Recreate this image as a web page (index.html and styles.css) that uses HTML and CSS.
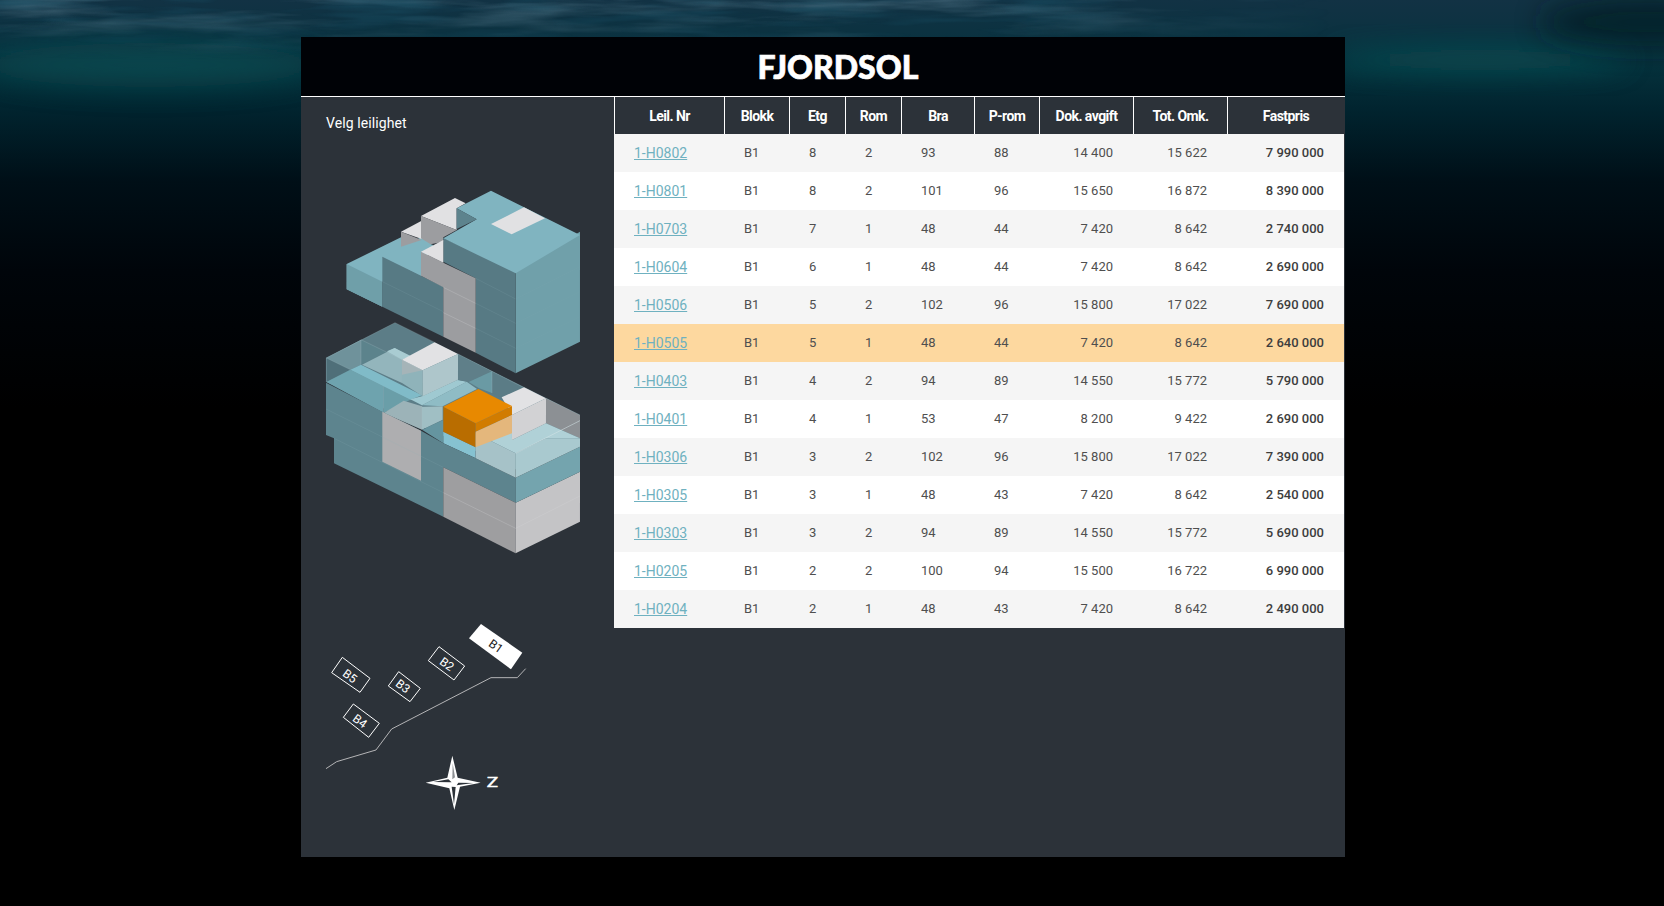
FILE: index.html
```html
<!DOCTYPE html>
<html lang="no">
<head>
<meta charset="utf-8">
<title>Fjordsol</title>
<link rel="stylesheet" href="styles.css">
</head>
<body>
<svg class="backdrop" viewBox="0 0 1664 906" preserveAspectRatio="none" aria-hidden="true">
  <defs>
    <linearGradient id="sea" x1="0" y1="0" x2="0" y2="1">
      <stop offset="0" stop-color="#123244"/>
      <stop offset="0.045" stop-color="#0a3240"/>
      <stop offset="0.075" stop-color="#05313c"/>
      <stop offset="0.12" stop-color="#01242f"/>
      <stop offset="0.2" stop-color="#000f17"/>
      <stop offset="0.3" stop-color="#00050a"/>
      <stop offset="0.45" stop-color="#000"/>
    </linearGradient>
    <filter id="soft" x="-30%" y="-100%" width="160%" height="300%"><feGaussianBlur stdDeviation="14"/></filter>
    <filter id="waves" x="0" y="0" width="100%" height="100%">
      <feTurbulence type="fractalNoise" baseFrequency="0.007 0.06" numOctaves="4" seed="11"/>
      <feColorMatrix type="matrix" values="0 0 0 0 0.2  0 0 0 0 0.36  0 0 0 0 0.46  2.4 0 0 0 -1.1"/>
    </filter>
    <filter id="troughs" x="0" y="0" width="100%" height="100%">
      <feTurbulence type="fractalNoise" baseFrequency="0.009 0.09" numOctaves="3" seed="4"/>
      <feColorMatrix type="matrix" values="0 0 0 0 0.01  0 0 0 0 0.08  0 0 0 0 0.13  3 0 0 0 -1.3"/>
    </filter>
    <linearGradient id="fade" x1="0" y1="0" x2="0" y2="1">
      <stop offset="0" stop-color="#fff"/>
      <stop offset="0.5" stop-color="#666"/>
      <stop offset="1" stop-color="#000"/>
    </linearGradient>
    <linearGradient id="fadeX" x1="0" y1="0" x2="1" y2="0">
      <stop offset="0" stop-color="#fff"/>
      <stop offset="0.6" stop-color="#fff"/>
      <stop offset="0.8" stop-color="#000"/>
    </linearGradient>
    <mask id="fadeMask"><rect width="1664" height="60" fill="url(#fade)"/></mask>
    <mask id="fadeSide"><rect width="1664" height="60" fill="url(#fadeX)"/></mask>
  </defs>
  <rect width="1664" height="906" fill="url(#sea)"/>
  <ellipse cx="150" cy="65" rx="170" ry="22" fill="#0b575a" opacity=".55" filter="url(#soft)"/>
  <ellipse cx="1480" cy="60" rx="150" ry="12" fill="#0c5558" opacity=".7" filter="url(#soft)"/>
  <ellipse cx="1650" cy="22" rx="110" ry="24" fill="#021a22" opacity=".7" filter="url(#soft)"/>
  <g mask="url(#fadeSide)">
    <rect width="1664" height="60" filter="url(#waves)" mask="url(#fadeMask)" opacity=".5"/>
    <rect width="1664" height="60" filter="url(#troughs)" mask="url(#fadeMask)" opacity=".6"/>
  </g>
</svg>

<main class="panel">
  <header class="masthead"><h1 class="brand">FJORDSOL</h1></header>
  <div class="content">
    <section class="picker">
      <h2 class="picker-title">Velg leilighet</h2>

      <svg class="iso" viewBox="301 130 313 430" role="img" aria-label="Bygg B1">
        <!-- upper volume -->
        <g transform="translate(300 130) scale(.3333)">
          <polygon points="140,402 303,322 400,345 363,400 247,455 247,530 140,478" fill="#80b4c0"/>
          <polygon points="247,380 363,322 395,340 363,440" fill="#80b4c0"/>
          <polygon points="140,402 247,455 247,530 140,478" fill="#6f9fa9"/>
          <polygon points="247,380 430,470 430,620 247,530" fill="#577a84"/>
          <line x1="247" y1="455" x2="430" y2="545" class="seam"/>
          <polygon points="303,305 365,272 365,327" fill="#e1e1e3"/>
          <polygon points="303,305 365,330 303,350" fill="#9c9da0"/>
          <polygon points="363,258 465,204 497,220 470,235 470,300" fill="#e1e1e3"/>
          <polygon points="363,258 470,300 430,322 430,335 392,343 363,325" fill="#9c9da0"/>
          <polygon points="840,305 840,635 647,730 647,420" fill="#70a0aa"/>
          <polygon points="430,325 647,420 647,730 527,668 527,445 430,395" fill="#577a84"/>
          <polygon points="470,235 573,182 840,315 647,430 430,325 530,268" fill="#80b4c0"/>
          <polygon points="470,235 530,268 470,297" fill="#5d838d"/>
          <polygon points="672,232 735,265 635,313 573,282" fill="#e1e1e3"/>
          <polygon points="363,365 430,398 527,445 527,668 430,620 430,472 363,437" fill="#9c9da0"/>
          <polygon points="363,365 430,330 430,398" fill="#e1e1e3"/>
          <line x1="647" y1="507" x2="840" y2="410" class="seam-faint"/>
          <line x1="647" y1="580" x2="840" y2="485" class="seam-faint"/>
          <line x1="647" y1="655" x2="840" y2="560" class="seam-faint"/>
          <line x1="527" y1="445" x2="647" y2="507" class="seam"/>
          <line x1="527" y1="520" x2="647" y2="580" class="seam"/>
          <line x1="527" y1="595" x2="647" y2="655" class="seam"/>
          <line x1="430" y1="472" x2="527" y2="520" class="seam-light"/>
          <line x1="430" y1="548" x2="527" y2="595" class="seam-light"/>
        </g>
        <!-- lower volume -->
        <g transform="translate(300 310) scale(.3333)">
          <polygon points="78,143 285,38 840,315 840,385 647,478 78,215" fill="#5c7d87"/>
          <polygon points="79,144 183,89 183,164 151,179" fill="#6f929b"/>
          <polygon points="79,144 151,179 79,216" fill="#4f6f79"/>
          <polygon points="183,89 306,149 306,127 284,114 183,164" fill="#5c838c"/>
          <polygon points="186,164 284,114 306,127 306,219" fill="#93b5bc"/>
          <polygon points="261,124 284,114 334,139 306,149" fill="#a9ccd2"/>
          <polygon points="79,216 151,179 251,229 251,309" fill="#6ea3ae"/>
          <polygon points="251,229 331,269 251,309" fill="#6a9ea8"/>
          <polygon points="151,179 183,164 366,256 331,269" fill="#80bbc8"/>
          <polygon points="366,286 500,215 531,237 428,289" fill="#8fbcc5"/>
          <polygon points="331,268 368,258 472,210 500,215 366,286" fill="#9fc9d1"/>
          <polygon points="366,290 428,289 428,329 366,359" fill="#a0bfc4"/>
          <polygon points="251,309 311,272 366,289 366,359" fill="#9cb3b8"/>
          <polygon points="474,132 576,184 506,216 474,209" fill="#5f7f89"/>
          <polygon points="506,216 576,184 576,249 536,234" fill="#6a9aa4"/>
          <polygon points="576,184 670,232 605,262 576,249" fill="#5b7c86"/>
          <polygon points="366,359 430,330 430,400" fill="#6595a0"/>
          <polygon points="430,365 527,412 527,445 430,400" fill="#86c2d1"/>
          <polygon points="78,218 247,305 363,362 430,400 527,445 647,503 647,578 430,472 430,620 102,460 102,385 78,375" fill="#5d848e"/>
          <polygon points="247,305 363,362 363,512 247,455" fill="#aeaeb0"/>
          <polygon points="430,472 647,578 647,730 430,620" fill="#9e9ea0"/>
          <polygon points="647,578 840,485 840,635 647,730" fill="#c4c4c6"/>
          <polygon points="647,503 840,410 840,485 647,578" fill="#74a4ae"/>
          <polygon points="738,265 840,315 840,385 738,340" fill="#8c9094"/>
          <polygon points="527,370 636,315 636,390 738,340 840,385 738,385 647,430" fill="#b0d1d7"/>
          <polygon points="647,430 738,385 840,385 840,410 647,503" fill="#a9c9cf"/>
          <polygon points="527,370 647,430 647,503 527,445" fill="#a6c2c8"/>
          <line x1="647" y1="430" x2="840" y2="332" class="seam-strong"/>
          <polygon points="605,262 672,232 738,265 636,315" fill="#e2e2e4"/>
          <polygon points="636,315 738,265 738,340 636,390" fill="#d2d2d4"/>
          <polygon points="306,149 368,181 368,259 306,219" fill="#8fb3ba"/>
          <polygon points="306,149 368,181 306,194" fill="#a5b4b8"/>
          <polygon points="306,149 404,97 474,132 368,181" fill="#e2e2e4"/>
          <polygon points="368,181 474,132 474,209 368,259" fill="#aec6cb"/>
          <polygon points="430,290 527,340 527,412 430,365" fill="#b96d00"/>
          <polygon points="527,340 636,288 636,315 527,365" fill="#d17c00"/>
          <polygon points="527,365 636,315 636,370 527,412" fill="#e4b77c"/>
          <polygon points="430,290 535,237 636,288 527,340" fill="#e88900"/>
          <line x1="79" y1="144" x2="285" y2="38" class="edge"/>
          <line x1="285" y1="38" x2="404" y2="97" class="edge"/>
          <line x1="79" y1="144" x2="151" y2="179" class="edge"/>
          <line x1="183" y1="89" x2="306" y2="149" class="edge"/>
          <line x1="474" y1="132" x2="670" y2="232" class="edge"/>
          <line x1="738" y1="265" x2="840" y2="315" class="edge"/>
          <line x1="79" y1="144" x2="79" y2="216" class="edge"/>
          <line x1="183" y1="89" x2="183" y2="164" class="edge"/>
          <line x1="576" y1="184" x2="576" y2="249" class="edge"/>
          <line x1="251" y1="229" x2="251" y2="309" class="edge"/>
          <line x1="366" y1="286" x2="366" y2="359" class="edge"/>
          <line x1="78" y1="297" x2="430" y2="472" class="seam"/>
          <line x1="102" y1="385" x2="430" y2="548" class="seam"/>
          <line x1="430" y1="548" x2="647" y2="655" class="seam-light"/>
          <line x1="647" y1="655" x2="840" y2="558" class="seam-light"/>
        </g>
      </svg>

      <svg class="siteplan" viewBox="310 610 240 210" role="img" aria-label="Situasjonsplan">
        <g transform="translate(310 610) scale(.3333)">
          <polygon points="477,85 513,42 637,128 603,178" fill="#fff"/>
          <polygon points="355,152 387,110 464,168 432,210" class="plot"/>
          <polygon points="235,228 266,185 331,235 300,275" class="plot"/>
          <polygon points="100,322 130,282 208,340 176,382" class="plot"/>
          <polygon points="65,188 97,142 180,205 150,247" class="plot"/>
          <polyline points="48,476 80,455 198,420 245,357 543,203 622,203 647,176" class="road"/>
        </g>
        <g transform="translate(415 745) scale(.3333)">
          <polygon points="112,32 128,98 197,113 135,125 118,195 103,130 32,113 97,98" fill="#fff"/>
          <polygon points="55,111 100,103 110,112" fill="#2c3239"/>
          <polygon points="175,114 130,113 125,121" fill="#2c3239"/>
          <polygon points="117,178 110,125 122,126" fill="#2c3239"/>
          <polygon points="113,55 120,97 112,103" fill="#8d9094"/>
        </g>
        <text class="north" transform="translate(487 787) scale(1.35 1)">Z</text>
        <text class="plot-label plot-label-on" dy=".36em" transform="translate(496 646) rotate(35)">B1</text>
        <text class="plot-label" dy=".36em" transform="translate(447 664) rotate(35)">B2</text>
        <text class="plot-label" dy=".36em" transform="translate(403 686) rotate(37)">B3</text>
        <text class="plot-label" dy=".36em" transform="translate(360 721) rotate(36)">B4</text>
        <text class="plot-label" dy=".36em" transform="translate(350 676) rotate(36)">B5</text>
      </svg>
    </section>

    <section class="listing">
      <table class="units">
        <colgroup>
          <col class="c-nr"><col class="c-blokk"><col class="c-etg"><col class="c-rom"><col class="c-bra"><col class="c-prom"><col class="c-dok"><col class="c-tot"><col class="c-pris">
        </colgroup>
        <thead>
          <tr><th>Leil. Nr</th><th>Blokk</th><th>Etg</th><th>Rom</th><th>Bra</th><th>P-rom</th><th>Dok. avgift</th><th>Tot. Omk.</th><th>Fastpris</th></tr>
        </thead>
        <tbody>
          <tr><td class="unit"><a href="#">1-H0802</a></td><td>B1</td><td>8</td><td>2</td><td>93</td><td>88</td><td class="num">14 400</td><td class="num">15 622</td><td class="price">7 990 000</td></tr>
          <tr><td class="unit"><a href="#">1-H0801</a></td><td>B1</td><td>8</td><td>2</td><td>101</td><td>96</td><td class="num">15 650</td><td class="num">16 872</td><td class="price">8 390 000</td></tr>
          <tr><td class="unit"><a href="#">1-H0703</a></td><td>B1</td><td>7</td><td>1</td><td>48</td><td>44</td><td class="num">7 420</td><td class="num">8 642</td><td class="price">2 740 000</td></tr>
          <tr><td class="unit"><a href="#">1-H0604</a></td><td>B1</td><td>6</td><td>1</td><td>48</td><td>44</td><td class="num">7 420</td><td class="num">8 642</td><td class="price">2 690 000</td></tr>
          <tr><td class="unit"><a href="#">1-H0506</a></td><td>B1</td><td>5</td><td>2</td><td>102</td><td>96</td><td class="num">15 800</td><td class="num">17 022</td><td class="price">7 690 000</td></tr>
          <tr class="active"><td class="unit"><a href="#">1-H0505</a></td><td>B1</td><td>5</td><td>1</td><td>48</td><td>44</td><td class="num">7 420</td><td class="num">8 642</td><td class="price">2 640 000</td></tr>
          <tr><td class="unit"><a href="#">1-H0403</a></td><td>B1</td><td>4</td><td>2</td><td>94</td><td>89</td><td class="num">14 550</td><td class="num">15 772</td><td class="price">5 790 000</td></tr>
          <tr><td class="unit"><a href="#">1-H0401</a></td><td>B1</td><td>4</td><td>1</td><td>53</td><td>47</td><td class="num">8 200</td><td class="num">9 422</td><td class="price">2 690 000</td></tr>
          <tr><td class="unit"><a href="#">1-H0306</a></td><td>B1</td><td>3</td><td>2</td><td>102</td><td>96</td><td class="num">15 800</td><td class="num">17 022</td><td class="price">7 390 000</td></tr>
          <tr><td class="unit"><a href="#">1-H0305</a></td><td>B1</td><td>3</td><td>1</td><td>48</td><td>43</td><td class="num">7 420</td><td class="num">8 642</td><td class="price">2 540 000</td></tr>
          <tr><td class="unit"><a href="#">1-H0303</a></td><td>B1</td><td>3</td><td>2</td><td>94</td><td>89</td><td class="num">14 550</td><td class="num">15 772</td><td class="price">5 690 000</td></tr>
          <tr><td class="unit"><a href="#">1-H0205</a></td><td>B1</td><td>2</td><td>2</td><td>100</td><td>94</td><td class="num">15 500</td><td class="num">16 722</td><td class="price">6 990 000</td></tr>
          <tr><td class="unit"><a href="#">1-H0204</a></td><td>B1</td><td>2</td><td>1</td><td>48</td><td>43</td><td class="num">7 420</td><td class="num">8 642</td><td class="price">2 490 000</td></tr>
        </tbody>
      </table>
    </section>
  </div>
</main>
</body>
</html>
```

FILE: styles.css
```css
* { box-sizing: border-box; }

html, body { height: 100%; }

body {
  margin: 0;
  padding: 37px 18px 0 0;
  background: #000;
  font-family: Roboto, "Liberation Sans", sans-serif;
  color: #4f4f4f;
  overflow: hidden;
}

.backdrop {
  position: fixed;
  inset: 0;
  width: 100%;
  height: 100%;
  z-index: -1;
}

.panel {
  width: 1044px;
  height: 820px;
  margin: 0 auto;
  background: #2c3239;
  display: flex;
  flex-direction: column;
}

.masthead {
  height: 60px;
  padding-left: 30px;
  background: #000206;
  border-bottom: 1px solid #fff;
  display: flex;
  align-items: center;
  justify-content: center;
  flex: none;
}

.brand {
  margin: 0;
  font-family: Lato, "Liberation Sans", sans-serif;
  font-weight: 900;
  font-size: 32px;
  line-height: 1;
  color: #fff;
  -webkit-text-stroke: .7px #fff;
}

.content { display: flex; flex: 1; min-height: 0; }

.picker { width: 313px; flex: none; }

.picker-title {
  margin: 0;
  padding: 18px 0 0 25px;
  height: 33px;
  font-size: 14px;
  line-height: 16px;
  font-weight: 400;
  letter-spacing: .1px;
  color: #fff;
}

.iso, .siteplan { display: block; width: 100%; }
.iso { height: 430px; }
.siteplan { width: 240px; height: 210px; margin: 50px 0 0 9px; }

.seam { stroke: #8fb3bb; stroke-width: 1.5; opacity: .3; }
.seam-faint { stroke: #8fb3bb; stroke-width: 1.5; opacity: .15; }
.seam-light { stroke: #d8d8da; stroke-width: 1.5; opacity: .5; }
.seam-strong { stroke: #d7e6e9; stroke-width: 2; opacity: .8; }
.edge { stroke: #a9c5cb; stroke-width: 1.5; opacity: .5; }

.plot { fill: none; stroke: #fff; stroke-width: 3; }
.road { fill: none; stroke: #b5b5b7; stroke-width: 3; }
.north {
  font-family: Lato, sans-serif;
  font-weight: 400;
  font-size: 13.5px;
  fill: #fff;
  stroke: #fff;
  stroke-width: .5px;
}
.plot-label {
  font-family: Roboto, sans-serif;
  font-size: 12px;
  fill: #fff;
  text-anchor: middle;
}
.plot-label-on { fill: #222; }

.listing { flex: 1; padding-right: 1px; }

.units {
  width: 730px;
  table-layout: fixed;
  border-collapse: separate;
  border-spacing: 0;
  font-size: 13px;
}

.c-nr { width: 111px; }
.c-blokk { width: 65px; }
.c-etg { width: 56px; }
.c-rom { width: 56px; }
.c-bra { width: 73px; }
.c-prom { width: 65px; }
.c-dok { width: 94px; }
.c-tot { width: 94px; }
.c-pris { width: 116px; }

.units th {
  height: 37px;
  padding: 0;
  border-right: 1px solid #fff;
  font-size: 14px;
  font-weight: 700;
  letter-spacing: -.55px;
  color: #fff;
  text-align: center;
}
.units th:first-child { border-left: 1px solid #fff; }
.units th:last-child { border-right: 0; }

.units td {
  height: 38px;
  padding: 0 0 2px 19px;
  background: #fff;
  white-space: nowrap;
}
.units tbody tr:nth-child(odd) td { background: #f5f5f5; }
.units tbody tr.active td { background: #fdd89f; }

.units td.unit { padding: 0 0 0 20px; }
.units a { color: #6fb1c0; font-size: 14px; }

.units td.num { padding: 0 21px 2px 0; text-align: right; }
.units td.price { padding: 0 20px 2px 0; text-align: right; font-weight: 500; color: #3d3d3d; }
```
